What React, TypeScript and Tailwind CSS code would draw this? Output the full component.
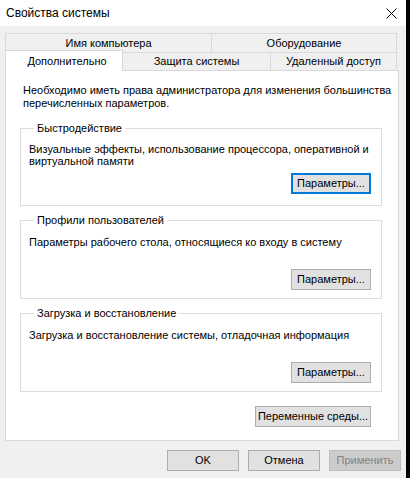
import type { ReactNode } from "react";

function WinButton({
  children,
  width,
  focused,
  disabled,
}: {
  children: ReactNode;
  width: string;
  focused?: boolean;
  disabled?: boolean;
}) {
  let cls = "border border-[#adadad] bg-[#e1e1e1] text-black";
  if (focused) cls = "border-2 border-[#0078d7] bg-[#e1e1e1] text-black";
  if (disabled) cls = "border border-[#bfbfbf] bg-[#cccccc] text-[#838383]";
  return (
    <button
      className={`flex h-[21px] shrink-0 items-center justify-center whitespace-nowrap ${width} ${cls}`}
    >
      {children}
    </button>
  );
}

function GroupBox({
  title,
  children,
  className,
}: {
  title: string;
  children: ReactNode;
  className?: string;
}) {
  return (
    <fieldset
      className={`ml-[14px] w-[362px] border border-[#dcdcdc] pl-[8px] pr-[10px] ${className ?? ""}`}
    >
      <legend className="ml-[5px] px-[3px] leading-[13px]">{title}</legend>
      {children}
    </fieldset>
  );
}

export default function App() {
  return (
    <div className="flex h-[478px] w-[410px] overflow-hidden bg-black font-['Liberation_Sans',Arial,sans-serif] text-[11px] leading-[13px] text-black">
      <div className="flex w-[406px] flex-col bg-[#f0f0f0]">
        <div className="flex h-[26px] shrink-0 items-center justify-between bg-white pl-[6px] pr-[9px]">
          <span className="text-[12px]">Свойства системы</span>
          <svg width="11" height="11" viewBox="0 0 11 11">
            <path d="M0.5 0.5 L10.5 10.5 M10.5 0.5 L0.5 10.5" stroke="#000" strokeWidth="1" />
          </svg>
        </div>

        <div className="flex flex-1 flex-col px-[5px] pt-[7px]">
          {/* tabs */}
          <div className="flex h-[19px] w-[392px]">
            <div className="flex w-[206px] items-center justify-center border-l border-t border-[#d9d9d9]">
              Имя компьютера
            </div>
            <div className="flex w-[186px] items-center justify-center border-x border-t border-[#d9d9d9]">
              Оборудование
            </div>
          </div>
          <div className="flex h-[18px] w-[392px] items-end">
            <div className="relative z-10 -mb-px flex h-[21px] w-[118px] items-center justify-center border-x border-t border-[#d9d9d9] bg-white pl-[6px]">
              Дополнительно
            </div>
            <div className="flex h-[18px] w-[147px] items-center justify-center border-t border-[#d9d9d9]">
              Защита системы
            </div>
            <div className="flex h-[18px] w-[127px] items-center justify-center border-x border-t border-[#d9d9d9]">
              Удаленный доступ
            </div>
          </div>

          {/* panel */}
          <div className="flex h-[371px] w-[394px] shrink-0 flex-col border border-[#d9d9d9] bg-white pt-[13px] whitespace-nowrap">
            <p className="ml-[17px]">
              Необходимо иметь права администратора для изменения большинства
              <br />
              перечисленных параметров.
            </p>

            <GroupBox title="Быстродействие" className="mt-[12px] pb-[11px]">
              <p className="mt-[8px] leading-[12px]">
                Визуальные эффекты, использование процессора, оперативной и
                <br />
                виртуальной памяти
              </p>
              <div className="mt-[6px] flex justify-end">
                <WinButton width="w-[80px]" focused>
                  Параметры...
                </WinButton>
              </div>
            </GroupBox>

            <GroupBox title="Профили пользователей" className="mt-[8px] pb-[8px]">
              <p className="mt-[9px] leading-[12px]">
                Параметры рабочего стола, относящиеся ко входу в систему
              </p>
              <div className="mt-[21px] flex justify-end">
                <WinButton width="w-[80px]">Параметры...</WinButton>
              </div>
            </GroupBox>

            <GroupBox title="Загрузка и восстановление" className="mt-[8px] pb-[8px]">
              <p className="mt-[9px] leading-[12px]">
                Загрузка и восстановление системы, отладочная информация
              </p>
              <div className="mt-[21px] flex justify-end">
                <WinButton width="w-[80px]">Параметры...</WinButton>
              </div>
            </GroupBox>

            <div className="mr-[27px] mt-[14px] flex justify-end">
              <WinButton width="w-[116px]">Переменные среды...</WinButton>
            </div>
          </div>

          {/* dialog buttons */}
          <div className="mt-[9px] flex justify-end gap-[9px]">
            <WinButton width="w-[72px]">OK</WinButton>
            <WinButton width="w-[72px]">Отмена</WinButton>
            <WinButton width="w-[72px]" disabled>
              Применить
            </WinButton>
          </div>
        </div>
      </div>
    </div>
  );
}
